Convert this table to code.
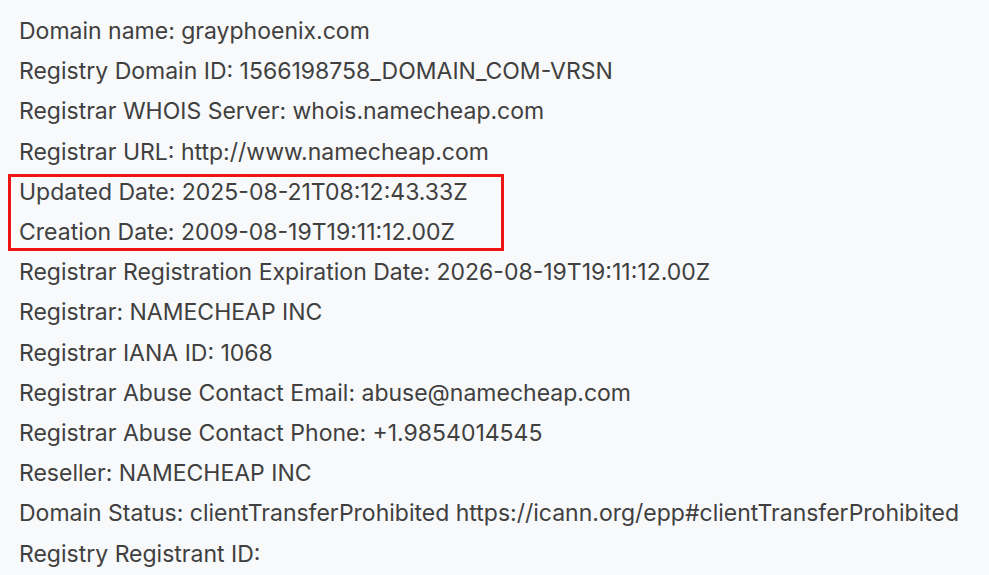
export default function App() {
  const before = [
    "Domain name: grayphoenix.com",
    "Registry Domain ID: 1566198758_DOMAIN_COM-VRSN",
    "Registrar WHOIS Server: whois.namecheap.com",
    "Registrar URL: http://www.namecheap.com",
  ];
  const boxed = [
    "Updated Date: 2025-08-21T08:12:43.33Z",
    "Creation Date: 2009-08-19T19:11:12.00Z",
  ];
  const after = [
    "Registrar Registration Expiration Date: 2026-08-19T19:11:12.00Z",
    "Registrar: NAMECHEAP INC",
    "Registrar IANA ID: 1068",
    "Registrar Abuse Contact Email: abuse@namecheap.com",
    "Registrar Abuse Contact Phone: +1.9854014545",
    "Reseller: NAMECHEAP INC",
    "Domain Status: clientTransferProhibited https://icann.org/epp#clientTransferProhibited",
    "Registry Registrant ID:",
  ];
  return (
    <div
      className="w-[989px] h-[575px] overflow-hidden bg-[#f8f9fa] pl-[19px] pt-[11px] text-[23px] leading-[40.2px] text-[#404040] whitespace-nowrap"
      style={{ fontFamily: "Inter, 'Noto Sans', sans-serif" }}
    >
      {before.map((t) => (
        <div key={t}>{t}</div>
      ))}
      <div className="relative">
        {boxed.map((t) => (
          <div key={t}>{t}</div>
        ))}
        <span className="absolute -left-[11px] top-[2px] w-[496px] h-[77px] border-[3px] border-[#f01414]" />
      </div>
      {after.map((t) => (
        <div key={t}>{t}</div>
      ))}
    </div>
  );
}
